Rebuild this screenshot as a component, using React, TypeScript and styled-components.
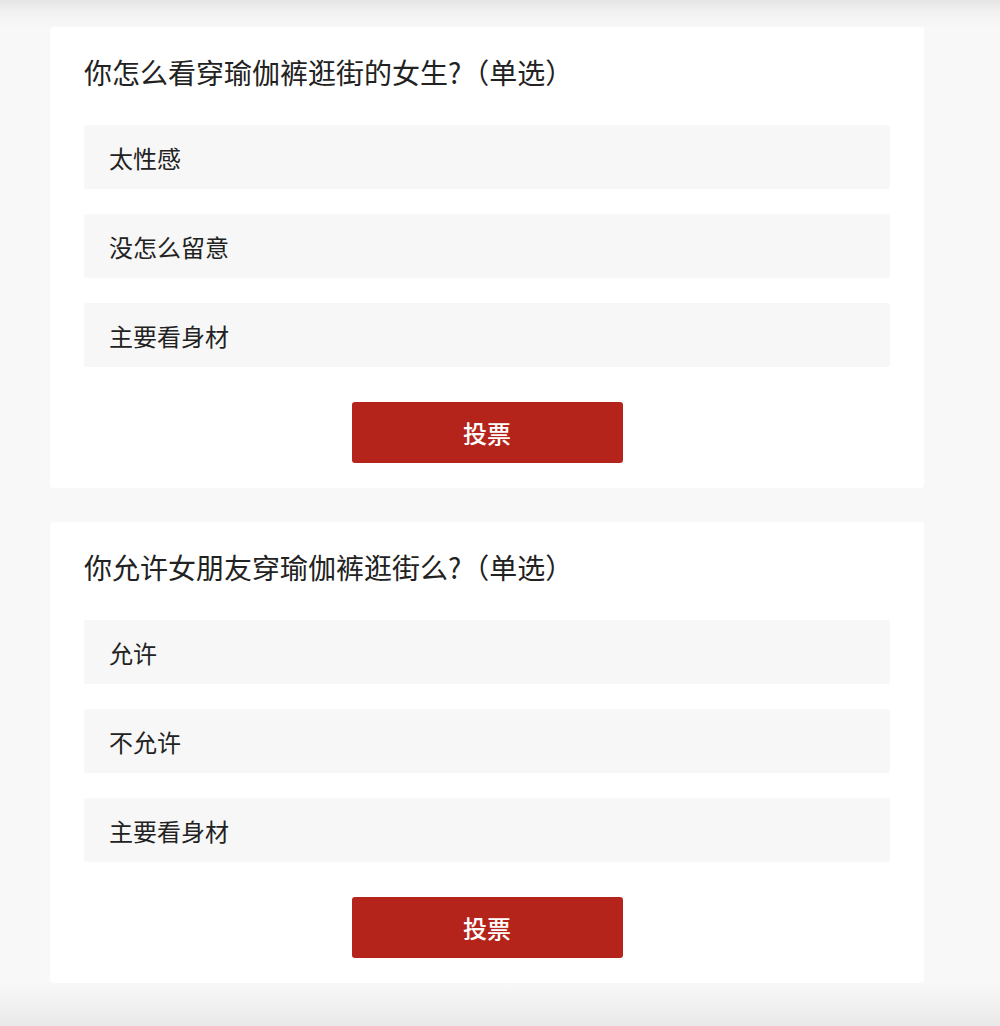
import styled, { createGlobalStyle } from 'styled-components'

const polls = [
  {
    id: 1,
    title: '你怎么看穿瑜伽裤逛街的女生?（单选）',
    options: ['太性感', '没怎么留意', '主要看身材'],
  },
  {
    id: 2,
    title: '你允许女朋友穿瑜伽裤逛街么?（单选）',
    options: ['允许', '不允许', '主要看身材'],
  },
]

export default function App() {
  return (
    <>
      <GlobalStyle />
      <Page>
        {polls.map((poll) => (
          <Card key={poll.id}>
            <Title>{poll.title}</Title>
            <Options>
              {poll.options.map((option) => (
                <Option key={option}>{option}</Option>
              ))}
            </Options>
            <VoteButton type="button">投票</VoteButton>
          </Card>
        ))}
      </Page>
    </>
  )
}

const GlobalStyle = createGlobalStyle`
  html {
    height: 100%;
    background: linear-gradient(
      to bottom,
      #e5e5e5 0,
      #f2f2f2 12px,
      #f8f8f8 28px,
      #f8f8f8 calc(100% - 42px),
      #f1f1f1 calc(100% - 22px),
      #e9e9e9 100%
    );
  }

  body {
    margin: 0;
    font-family: 'Noto Sans CJK SC', 'Noto Sans', sans-serif;
    color: #222;
  }
`

const Page = styled.main`
  display: flex;
  flex-direction: column;
  gap: 34px;
  width: 874px;
  padding: 27px 0 0 50px;
`

const Card = styled.section`
  display: flex;
  flex-direction: column;
  align-items: center;
  padding: 25px 34px;
  background: #fff;
  border-radius: 4px;
`

const Title = styled.h2`
  align-self: stretch;
  margin: 0 0 33px;
  font-size: 28px;
  font-weight: 400;
  line-height: 40px;
  color: #222;
`

const Options = styled.div`
  display: flex;
  flex-direction: column;
  gap: 25px;
  align-self: stretch;
  margin-bottom: 35px;
`

const Option = styled.div`
  display: flex;
  align-items: center;
  height: 64px;
  padding: 0 25px;
  background: #f7f7f7;
  border-radius: 3px;
  font-size: 24px;
  color: #222;
  cursor: pointer;
`

const VoteButton = styled.button`
  width: 271px;
  height: 61px;
  border: 0;
  border-radius: 3px;
  background: #b5241a;
  color: #fff;
  font-family: inherit;
  font-size: 24px;
  font-weight: 500;
  cursor: pointer;
`
